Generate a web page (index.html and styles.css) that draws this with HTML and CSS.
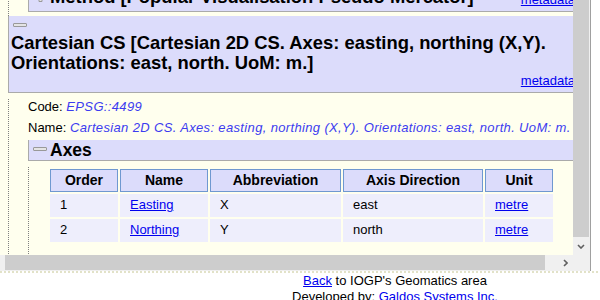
FILE: index.html
```html
<!DOCTYPE html>
<html lang="en">
<head>
    <meta charset="UTF-8">
    <title>Cartesian CS [Cartesian 2D CS]</title>
    <link rel="stylesheet" href="styles.css">
</head>
<body>
    <div class="frame">
        <div class="viewport">
            <div class="page">
                <div class="node">
                    <div class="node-body">
                        <div class="node">
                            <div class="node-head">
                                <span class="toggle plus">
                                    <svg width="11" height="11" viewBox="0 0 11 11"><path d="M4 .5H7V4H10.5V7H7V10.5H4V7H.5V4H4Z" fill="#e6e6e6" stroke="#999"/></svg>
                                </span>
                                <span class="node-title">Method [Popular Visualisation Pseudo Mercator]</span>
                                <a class="meta" href="#">metadata</a>
                            </div>
                        </div>
                    </div>
                </div>

                <div class="node">
                    <div class="node-head">
                        <span class="toggle"></span>
                        <span class="node-title">Cartesian CS [Cartesian 2D CS. Axes: easting, northing (X,Y). Orientations: east, north. UoM: m.]</span>
                        <a class="meta" href="#">metadata</a>
                    </div>
                    <div class="node-body">
                        <p class="field">Code: <span class="value">EPSG::4499</span></p>
                        <p class="field">Name: <span class="value">Cartesian 2D CS. Axes: easting, northing (X,Y). Orientations: east, north. UoM: m.</span></p>

                        <div class="node axes">
                            <div class="node-head small">
                                <span class="toggle"></span>
                                <span class="node-title">Axes</span>
                            </div>
                            <div class="node-body">
                                <table class="axes-table">
                                    <thead>
                                        <tr>
                                            <th class="col-order">Order</th>
                                            <th class="col-name">Name</th>
                                            <th class="col-abbr">Abbreviation</th>
                                            <th class="col-dir">Axis Direction</th>
                                            <th class="col-unit">Unit</th>
                                        </tr>
                                    </thead>
                                    <tbody>
                                        <tr>
                                            <td>1</td>
                                            <td><a href="#">Easting</a></td>
                                            <td>X</td>
                                            <td>east</td>
                                            <td><a href="#">metre</a></td>
                                        </tr>
                                        <tr>
                                            <td>2</td>
                                            <td><a href="#">Northing</a></td>
                                            <td>Y</td>
                                            <td>north</td>
                                            <td><a href="#">metre</a></td>
                                        </tr>
                                    </tbody>
                                </table>
                            </div>
                        </div>
                    </div>
                </div>
            </div>
        </div>

        <!-- scrollbars of the frame -->
        <div class="vbar">
            <div class="vthumb"></div>
            <div class="arrow">
                <svg width="8" height="5" viewBox="0 0 8 5"><path d="M1 1L4 4L7 1" fill="none" stroke="#606060" stroke-width="1.6"/></svg>
            </div>
        </div>
        <div class="hbar">
            <div class="hthumb"></div>
            <div class="arrow right">
                <svg width="5" height="8" viewBox="0 0 5 8"><path d="M1 1L4 4L1 7" fill="none" stroke="#606060" stroke-width="1.6"/></svg>
            </div>
        </div>
        <div class="corner"></div>
    </div>

    <div class="separator"></div>

    <div class="footer">
        <a href="#">Back</a> to IOGP's Geomatics area<br>
        Developed by: <a href="#">Galdos Systems Inc.</a>
    </div>
</body>
</html>
```

FILE: styles.css
```css
body {
    margin: 0;
    font-family: "Liberation Sans", Arial, sans-serif;
    font-size: 13px;
    color: #000;
    background: #fff;
    overflow: hidden;
}
a {
    color: #00e;
}

/* frame with its own scrollbars */
.frame {
    display: grid;
    grid-template-columns: 573px 17px;
    grid-template-rows: 255px 16px;
    width: 590px;
    border-right: 1px solid #a0a0a0;
}
.viewport {
    overflow: hidden;
    background: #ffffee;
}
.page {
    width: 572px;
    margin-top: -17px;
    padding-left: 8px;
    background: #ffffee;
}
.vbar {
    display: flex;
    flex-direction: column;
    background: #f0f0f0;
}
.vthumb {
    width: 16px;
    height: 237px;
    background: #cdcdcd;
}
.vbar .arrow {
    flex: 1;
    display: flex;
    align-items: center;
    justify-content: center;
    padding-right: 1px;
}
.arrow svg {
    display: block;
}
.hbar {
    display: flex;
    padding-left: 5px;
    background: #f0f0f0;
}
.hthumb {
    width: 540px;
    height: 15px;
    background: #cdcdcd;
}
.hbar .arrow {
    flex: 1;
    display: flex;
    align-items: center;
    justify-content: flex-end;
    padding: 0 5px 1px 0;
}
.corner {
    background: #f0f0f0;
}
.separator {
    height: 2px;
    background: repeating-linear-gradient(to right, #e2e2c8 0 2px, transparent 2px 4px);
}
.footer {
    width: 790px;
    text-align: center;
    line-height: 16px;
}

/* tree of nodes */
.node-head {
    display: flex;
    flex-wrap: wrap;
    align-items: center;
    padding: 4px 5px 4px 2px;
    background: #dcdcfb;
    border-left: 1px solid #aaa;
    border-bottom: 1px solid #aaa;
}
.node-head.small {
    padding-top: 0;
    padding-bottom: 0;
}
.toggle {
    width: 12px;
    height: 2px;
    margin: 3px 3px 6px 2px;
    background: #e4e4e4;
    border: 1px solid #999;
    border-radius: 1px;
}
.toggle.plus {
    width: 14px;
    height: 11px;
    margin: 0 3px 2px 2px;
    background: none;
    border: none;
}
.toggle.plus svg {
    display: block;
    margin: 0 auto;
}
.node-title {
    font-size: 18.4px;
    font-weight: bold;
    line-height: 20px;
}
.small .node-title {
    font-size: 17.5px;
}
.meta {
    margin-left: auto;
    align-self: flex-end;
    line-height: 15px;
}
.node-body {
    border-left: 1px dotted #808080;
    padding: 0 0 4px 19px;
}
.field {
    margin: 6px 0 0;
    line-height: 15px;
}
.value {
    font-style: italic;
    color: #3c3cf0;
    letter-spacing: 0.35px;
}
.axes {
    margin-top: 5px;
}
.axes > .node-body {
    padding-bottom: 30px;
}

/* axes table */
.axes-table {
    table-layout: fixed;
    width: 507px;
    margin-top: 6px;
    border-spacing: 2px;
}
.axes-table th {
    box-sizing: border-box;
    padding: 2px 0;
    font-size: 14px;
    line-height: 17px;
    background: #dcdcfb;
    border: 1px solid #6f98d0;
}
.axes-table td {
    padding: 3px 10px 5px;
    line-height: 15px;
    background: #eeeefc;
}
.col-order { width: 68px; }
.col-name { width: 88px; }
.col-abbr { width: 131px; }
.col-dir { width: 140px; }
.col-unit { width: 68px; }
```
